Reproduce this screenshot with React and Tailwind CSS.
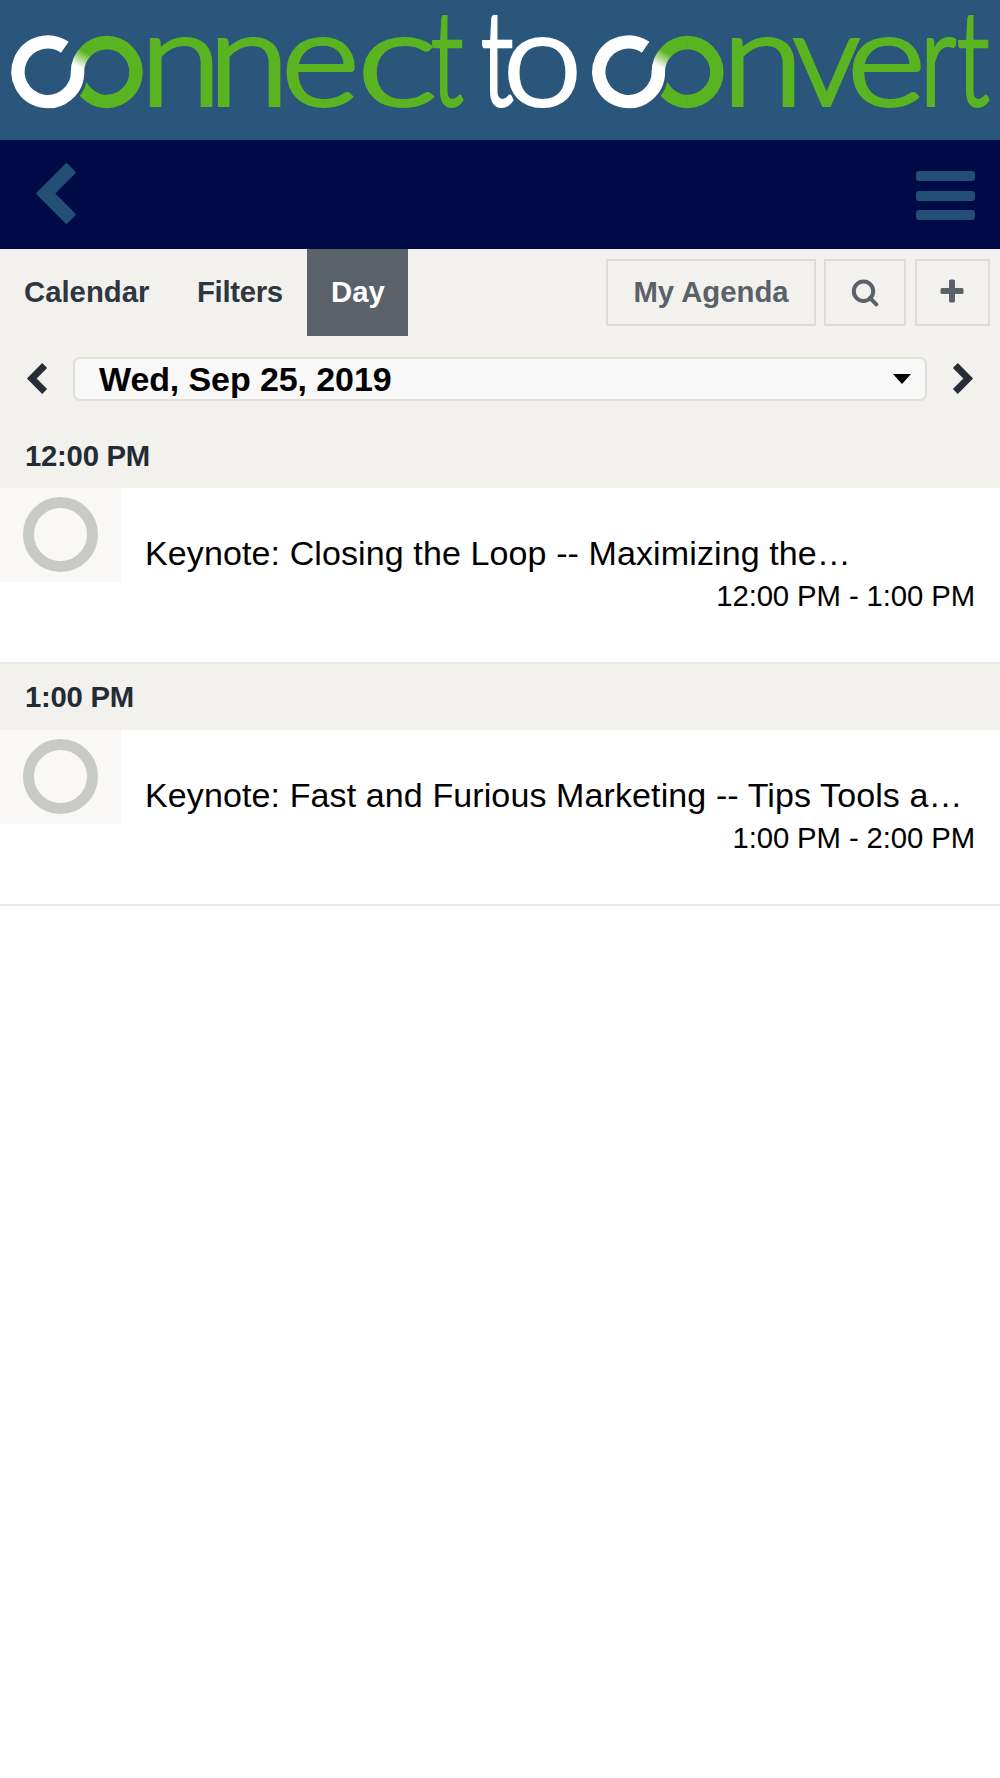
import React from 'react';

const sessions = [
    {
        slot: '12:00 PM',
        title: 'Keynote: Closing the Loop -- Maximizing the…',
        time: '12:00 PM - 1:00 PM',
    },
    {
        slot: '1:00 PM',
        title: 'Keynote: Fast and Furious Marketing -- Tips Tools a…',
        time: '1:00 PM - 2:00 PM',
    },
];

// Wordmark letters: start x and horizontal stretch for each one
const letters = [
    { char: 'n', x: 140, stretch: 1.13 },
    { char: 'n', x: 208, stretch: 1.13 },
    { char: 'e', x: 281, stretch: 1.15 },
    { char: 'c', x: 357, stretch: 1.3 },
    { char: 't', x: 431, stretch: 0.72 },
    { char: 't', x: 481, stretch: 0.72, white: true },
    { char: 'o', x: 503, stretch: 1.08, white: true },
    { char: 'n', x: 722, stretch: 1.13 },
    { char: 'v', x: 793, stretch: 1.02 },
    { char: 'e', x: 847, stretch: 1.15 },
    { char: 'r', x: 920, stretch: 0.78 },
    { char: 't', x: 957, stretch: 0.72 },
];

// Two linked rings, the white one flowing into the green one
const LinkedRings = ({ x }) => (
    <g transform={`translate(${x} 0)`} fill="none" strokeWidth="13.4">
        <path d="M107 101.5A29.5 29.5 0 0 1 80.4 84.4" stroke="#5ab421" />
        <path d="M77.5 72A29.5 29.5 0 0 1 107 42.5" stroke="url(#ring-fade)" />
        <path d="M106.5 42.5A29.5 29.5 0 0 1 106.5 101.5" stroke="#5ab421" />
        <path d="M86 72A38 38 0 0 1 48 110" stroke="#29567a" strokeWidth="3.5" clipPath="url(#ring-gap)" />
        <path d="M64.8 47.3A29.8 29.8 0 1 0 77.6 71.5" stroke="#fff" />
    </g>
);

const Logo = () => (
    <svg width="1000" height="140" viewBox="0 0 1000 140" role="img" aria-label="connect to convert" className="overflow-visible">
        <defs>
            <linearGradient id="ring-fade" gradientUnits="userSpaceOnUse" x1="77" y1="66" x2="85" y2="52">
                <stop offset="0" stopColor="#fff" />
                <stop offset="1" stopColor="#5ab421" />
            </linearGradient>
            <clipPath id="ring-gap">
                <rect x="68" y="78" width="22" height="20" />
            </clipPath>
        </defs>
        <LinkedRings x={0} />
        <LinkedRings x={580.8} />
        <g fontFamily="Lato, sans-serif" fontSize="131" fontWeight="300" strokeWidth="4">
            {letters.map(({ char, x, stretch, white }) => (
                <text
                    key={x}
                    transform={`translate(${x} 105) scale(${stretch} 1)`}
                    fill={white ? '#fff' : '#5ab421'}
                    stroke={white ? '#fff' : '#5ab421'}
                >
                    {char}
                </text>
            ))}
        </g>
    </svg>
);

const Chevron = ({ className }) => (
    <svg viewBox="0 0 40 61" className={className} fill="currentColor" stroke="currentColor" strokeWidth="3" strokeLinejoin="round">
        <path d="M1.8 30.5L30.5 1.8L38.2 9.5L17.2 30.5L38.2 51.5L30.5 59.2Z" />
    </svg>
);

const Session = ({ title, time }) => (
    <div className="flex h-[176px] items-start border-b-2 border-[#e9ebec] bg-white">
        <div className="flex h-[94px] w-[121px] shrink-0 justify-center bg-[#f9f8f6] pt-[9px]">
            <div className="size-[75px] rounded-full border-[11px] border-[#c8cac8]"></div>
        </div>
        <div className="flex-1 whitespace-nowrap pl-6 pr-[25px] pt-[45px] text-black">
            <div className="text-[34px] leading-[40px] tracking-[0.11px]">{title}</div>
            <div className="pt-px text-right text-[29.3px] leading-[44px] tracking-[-0.1px]">{time}</div>
        </div>
    </div>
);

const App = () => {
    return (
        <div className="min-h-[1778px] w-[1000px] bg-white font-['Liberation_Sans',Arial,sans-serif]">
            <header className="h-[140px] bg-[#29567a]">
                <Logo />
            </header>

            <nav className="flex h-[109px] items-start justify-between bg-[#000a47] pl-9 pr-[25px] text-[#234f76]">
                <Chevron className="mt-[23px] h-[61px] w-10" />
                <div className="mt-[31px] flex flex-col gap-[9.5px]">
                    <div className="h-[10px] w-[59px] rounded-[3px] bg-current"></div>
                    <div className="h-[10px] w-[59px] rounded-[3px] bg-current"></div>
                    <div className="h-[10px] w-[59px] rounded-[3px] bg-current"></div>
                </div>
            </nav>

            <div className="bg-[#f2f1ed]">
                {/* Tabs and actions */}
                <div className="flex h-[87px] justify-between pr-[10px] text-[29.3px] font-bold leading-[85px] text-[#2d3641]">
                    <div className="flex">
                        <div className="w-[173px] pl-6">Calendar</div>
                        <div className="w-[134px] pl-6 tracking-[-0.3px]">Filters</div>
                        <div className="w-[101px] bg-[#5a6168] pl-6 text-white">Day</div>
                    </div>
                    <div className="flex pt-[10px] leading-[62px] text-[#5a6168]">
                        <div className="h-[67px] w-[210px] border-2 border-[#dddcd7] text-center">My Agenda</div>
                        <div className="ml-2 flex h-[67px] w-[82px] justify-center border-2 border-[#dddcd7] pt-[18px]">
                            <svg width="28" height="28" viewBox="0 0 28 28" fill="none" stroke="currentColor" strokeWidth="4">
                                <circle cx="12.5" cy="12.3" r="9.7" />
                                <path d="M19 19L25.3 25.3" strokeLinecap="round" />
                            </svg>
                        </div>
                        <div className="ml-[9px] flex h-[67px] w-[75px] justify-center border-2 border-[#dddcd7] pr-[2px] pt-[18px]">
                            <svg width="24" height="24" viewBox="0 0 24 24" fill="currentColor">
                                <rect x="9" y="0.5" width="6" height="23" rx="1.5" />
                                <rect x="0.5" y="9" width="23" height="6" rx="1.5" />
                            </svg>
                        </div>
                    </div>
                </div>

                {/* Date picker */}
                <div className="flex items-center pl-[27px] pr-[27px] pt-[21px] text-[#262d36]">
                    <Chevron className="mb-[2px] h-[31px] w-5" />
                    <div className="ml-[26px] flex h-[44px] w-[854px] items-center justify-between rounded-[7px] border-2 border-[#e0dfd8] bg-[#f8f8f8] pl-6 pr-[14px] text-black">
                        <span className="text-[34px] font-bold leading-[40px] tracking-[-0.1px]">Wed, Sep 25, 2019</span>
                        <svg width="18" height="10" viewBox="0 0 18 10">
                            <path d="M0 0H18L9 10Z" />
                        </svg>
                    </div>
                    <Chevron className="mb-[2px] ml-[26px] h-[31px] w-5 rotate-180" />
                </div>
            </div>

            {sessions.map((session, i) => (
                <section key={session.slot}>
                    <div className={`${i === 0 ? 'h-[87px] pt-[33px]' : 'h-[65.5px] pt-[11px]'} bg-[#f2f1ed] pl-[25px] text-[29.3px] font-bold leading-[44px] tracking-[-0.25px] text-[#232b34]`}>
                        {session.slot}
                    </div>
                    <Session title={session.title} time={session.time} />
                </section>
            ))}
        </div>
    );
};

export default App;
